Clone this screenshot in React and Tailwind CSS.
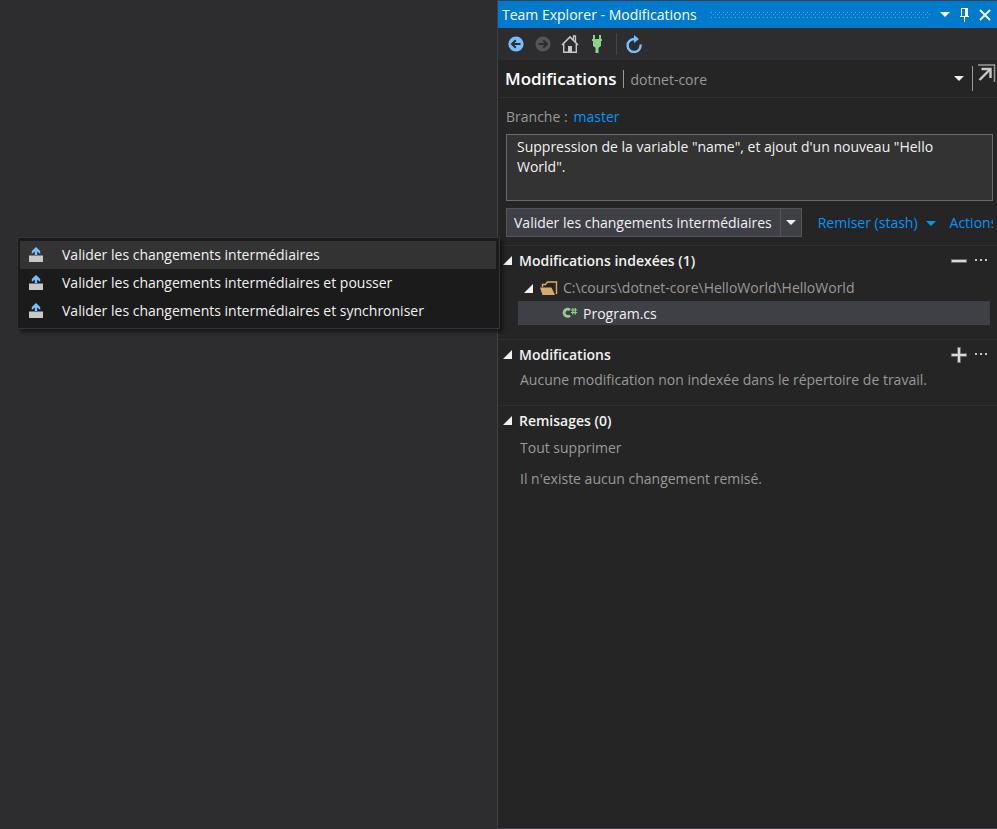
import { useState } from 'react'

const COMMIT_ACTIONS = [
  'Valider les changements intermédiaires',
  'Valider les changements intermédiaires et pousser',
  'Valider les changements intermédiaires et synchroniser',
]

function CaretDown({ className = '' }) {
  return (
    <svg width="10" height="5" viewBox="0 0 10 5" className={className} aria-hidden="true">
      <path d="M0 0h10L5 5z" fill="currentColor" />
    </svg>
  )
}

function ExpandedArrow() {
  return (
    <svg width="9" height="9" viewBox="0 0 9 9" className="shrink-0 text-[#f1f1f1]" aria-hidden="true">
      <path d="M9 0v9H0z" fill="currentColor" />
    </svg>
  )
}

function PinIcon() {
  return (
    <svg width="9" height="14" viewBox="0 0 9 14" shapeRendering="crispEdges" aria-hidden="true">
      <path d="M1 0h7v8h1v1H5v5H4V9H0V8h1zM2 1v7h3V1z" fill="currentColor" fillRule="evenodd" />
    </svg>
  )
}

function CloseIcon() {
  return (
    <svg width="12" height="12" viewBox="0 0 12 12" aria-hidden="true">
      <path d="M1 1l10 10M11 1L1 11" stroke="currentColor" strokeWidth="1.8" fill="none" />
    </svg>
  )
}

function ArrowCircle({ flip }) {
  return (
    <svg width="16" height="16" viewBox="0 0 16 16" aria-hidden="true">
      <circle cx="8" cy="8" r="7.6" fill="currentColor" />
      <path
        d={flip ? 'M3.5 8h8M8.2 4.2L12 8l-3.8 3.8' : 'M12.5 8h-8M7.8 4.2L4 8l3.8 3.8'}
        stroke="#2d2d30"
        strokeWidth="2"
        fill="none"
      />
    </svg>
  )
}

function HomeIcon() {
  return (
    <svg width="18" height="18" viewBox="0 0 18 18" aria-hidden="true">
      <path d="M12.5 5V1h2v6" fill="none" stroke="#c8c8c8" strokeWidth="1.3" />
      <path d="M1 10l8-8 8 8" fill="none" stroke="#c8c8c8" strokeWidth="1.6" />
      <path d="M2.7 9v8.2h12.6V9" fill="none" stroke="#c8c8c8" strokeWidth="1.4" />
      <path d="M7 11h4v6H7z" fill="#c8c8c8" />
    </svg>
  )
}

function PlugIcon() {
  return (
    <svg width="12" height="18" viewBox="0 0 12 18" aria-hidden="true">
      <path d="M2 0h2v4h4V0h2v4h1v2h-1v5l-2 1.500H7.500V18h-3v-5.500H4L2 11V6H1V4h1z" fill="#8dd28a" />
    </svg>
  )
}

function RefreshIcon() {
  return (
    <svg width="16" height="18" viewBox="0 0 16 18" aria-hidden="true">
      <path d="M14.500 9.500A6.500 6.500 0 1 1 8 4h2" fill="none" stroke="#75bfff" strokeWidth="2.400" />
      <path d="M8 0l5 4-5 4z" fill="#75bfff" />
    </svg>
  )
}

function UndockIcon() {
  return (
    <svg width="18" height="18" viewBox="0 0 18 18" aria-hidden="true">
      <path d="M0 1h16.500v17" fill="none" stroke="#9a9a9a" strokeWidth="1.500" />
      <path d="M1.500 16L12 5.500" fill="none" stroke="#c8c8c8" strokeWidth="2.400" />
      <path d="M3.500 5h9v9" fill="none" stroke="#c8c8c8" strokeWidth="2.400" />
    </svg>
  )
}

function CommitIcon() {
  return (
    <svg width="16" height="18" viewBox="0 0 16 18" className="shrink-0" aria-hidden="true">
      <path d="M8 1l4.200 4v3L9.200 5.500V9H6.800V5.500L3.800 8V5z" fill="#75bfff" />
      <path d="M1 9.500h14V16H1z" fill="#c8c8c8" />
    </svg>
  )
}

function FolderIcon() {
  return (
    <svg width="18" height="14" viewBox="0 0 18 14" className="shrink-0" aria-hidden="true">
      <path d="M2.500 6V3.500h3L7.500 1h9v12" fill="none" stroke="#d8aa6a" strokeWidth="1.400" />
      <path d="M0 6.500h11.500l3.500 7.500H2.500z" fill="#d8aa6a" />
    </svg>
  )
}

function CSharpIcon() {
  return (
    <svg width="16" height="12" viewBox="0 0 16 12" className="shrink-0" aria-hidden="true">
      <path d="M8 3A3.600 3.600 0 1 0 8 8.500" fill="none" stroke="#8dd28a" strokeWidth="2.800" />
      <path d="M10.800 1v6.500M13.300 1v6.500M9 3h6.200M9 5.500h6.200" stroke="#8dd28a" strokeWidth="1.200" />
    </svg>
  )
}

function DotGrip() {
  return (
    <svg height="6" className="h-[6px] min-w-0 flex-1" shapeRendering="crispEdges" aria-hidden="true">
      <defs>
        <pattern id="grip" width="4" height="6" patternUnits="userSpaceOnUse">
          <path d="M0 0h1v1H0zM2 2h1v1H2zM0 5h1v1H0z" fill="#59a8de" />
        </pattern>
      </defs>
      <rect width="100%" height="6" fill="url(#grip)" />
    </svg>
  )
}

function MoreButton() {
  return (
    <button type="button" aria-label="Plus" className="flex h-4 w-4 items-center justify-center">
      <svg width="14" height="4" viewBox="0 0 14 4" shapeRendering="crispEdges" aria-hidden="true">
        <path d="M1 0h2v2H1zM6 0h2v2H6zM11 0h2v2h-2z" fill="#c8c8c8" />
      </svg>
    </button>
  )
}

function StageButton({ label, plus }) {
  const shape = plus ? 'M1 8h14M8 1v14' : 'M1 8h14'
  return (
    <button type="button" aria-label={label} className="flex h-4 w-4 items-center justify-center">
      <svg width="16" height="16" viewBox="0 0 16 16" aria-hidden="true">
        <path d={shape} stroke="#7a7a7a" strokeWidth="3.600" strokeLinecap="square" />
        <path d={shape} stroke="#d8d8d8" strokeWidth="2" />
      </svg>
    </button>
  )
}

function Section({ title, actions, children }) {
  return (
    <section className="border-t border-[#2f2f32]">
      <div className="flex h-[29px] items-center pl-[5px] pr-2">
        <button type="button" className="flex items-center gap-[7px] font-semibold text-[#f1f1f1]">
          <ExpandedArrow />
          {title}
        </button>
        <div className="ml-auto flex gap-[6px]">{actions}</div>
      </div>
      {children}
    </section>
  )
}

function CommitMenu() {
  return (
    <ul
      role="menu"
      className="absolute right-full top-full z-10 mr-[7px] mt-px w-[483px] border border-[#333337] bg-[#1b1b1c] p-[3px] pl-[2px] shadow-[3px_3px_4px_rgba(0,0,0,0.5)]"
    >
      {COMMIT_ACTIONS.map((label, i) => (
        <li key={label} role="none">
          <button
            type="button"
            role="menuitem"
            className={`flex h-7 w-full items-center gap-[18px] whitespace-nowrap pl-2 text-left text-[#f1f1f1] ${i === 0 ? 'bg-[#333334]' : 'hover:bg-[#333334]'}`}
          >
            <CommitIcon />
            {label}
          </button>
        </li>
      ))}
    </ul>
  )
}

export default function App() {
  const [menuOpen, setMenuOpen] = useState(true)
  const [message, setMessage] = useState(
    'Suppression de la variable "name", et ajout d\'un nouveau "Hello World".',
  )

  return (
    <div className="grid min-h-screen grid-cols-[minmax(0,1fr)_500px] bg-[#2d2d30] font-['Open_Sans','Noto_Sans',sans-serif] text-[14px] leading-5 text-[#999999]">
      <main />

      <aside className="min-w-0 border border-r-0 border-[#3f3f46] bg-[#252526]">
        <header className="flex h-[27px] items-center bg-[#007acc] pl-1 pr-[6px] text-white">
          <h1 className="mr-[14px]">Team Explorer - Modifications</h1>
          <DotGrip />
          <div className="ml-[10px] flex items-center gap-[10px]">
            <button type="button" aria-label="Position de la fenêtre"><CaretDown /></button>
            <button type="button" aria-label="Épingler"><PinIcon /></button>
            <button type="button" aria-label="Fermer"><CloseIcon /></button>
          </div>
        </header>

        <nav className="flex h-8 items-center bg-[#2d2d30] pb-px pl-[10px]">
          <button type="button" aria-label="Précédent" className="text-[#75bfff]"><ArrowCircle /></button>
          <button type="button" aria-label="Suivant" className="ml-[11px] text-[#555558]"><ArrowCircle flip /></button>
          <button type="button" aria-label="Accueil" className="ml-[10px]"><HomeIcon /></button>
          <button type="button" aria-label="Gérer les connexions" className="ml-3"><PlugIcon /></button>
          <span className="ml-[13px] h-[22px] w-px bg-[#46464a]" />
          <button type="button" aria-label="Actualiser" className="ml-[9px]"><RefreshIcon /></button>
        </nav>

        <div className="flex h-[37px] items-center pl-[7px]">
          <h2 className="text-[17px] font-semibold text-white">Modifications</h2>
          <span className="ml-[7px] h-[18px] w-px bg-[#999999]" />
          <span className="ml-[6px] pt-[2px]">dotnet-core</span>
          <button type="button" aria-label="Changer de page" className="ml-auto text-[#f1f1f1]"><CaretDown /></button>
          <span className="ml-2 h-[25px] w-px bg-[#999999]" />
          <button type="button" aria-label="Détacher" className="ml-[5px] mr-px self-start pt-1"><UndockIcon /></button>
        </div>

        <div className="border-t border-[#2f2f32] px-2 pb-2 pt-[9px]">
          <p className="flex gap-[6px]">
            Branche :
            <a href="#master" className="text-[#0097fb]">master</a>
          </p>
          <textarea
            aria-label="Message de validation"
            className="mt-[7px] block h-[67px] w-[calc(100%+4px)] resize-none border border-[#686872] bg-[#333333] px-[10px] py-[2px] text-[#f1f1f1] outline-none"
            value={message}
            onChange={(e) => setMessage(e.target.value)}
          />

          <div className="-mr-1 mt-[7px] flex items-center">
            <div className="relative flex h-[29px] shrink-0 border border-[#555559] bg-[#3f3f46] text-[#f1f1f1]">
              <button type="button" className="whitespace-nowrap pl-[7px] pr-2 pt-px">{COMMIT_ACTIONS[0]}</button>
              <button
                type="button"
                aria-label="Autres validations"
                aria-expanded={menuOpen}
                onClick={() => setMenuOpen(!menuOpen)}
                className="flex w-[21px] items-center justify-center border-l border-[#555559]"
              >
                <CaretDown />
              </button>
              {menuOpen && <CommitMenu />}
            </div>
            <div className="ml-4 flex min-w-0 gap-[14px] overflow-hidden whitespace-nowrap text-[#0097fb]">
              <button type="button" className="flex shrink-0 items-center gap-2">
                Remiser (stash)
                <CaretDown className="mt-[2px]" />
              </button>
              <button type="button" className="shrink-0">Actions</button>
            </div>
          </div>
        </div>

        <Section
          title="Modifications indexées (1)"
          actions={<><StageButton label="Tout désindexer" /><MoreButton /></>}
        >
          <div className="pb-[14px]">
            <div className="flex h-[26px] items-center pl-[26px]">
              <ExpandedArrow />
              <span className="ml-[7px] flex"><FolderIcon /></span>
              <span className="ml-[5px]">C:\cours\dotnet-core\HelloWorld\HelloWorld</span>
            </div>
            <button
              type="button"
              className="ml-5 mr-[7px] flex h-6 w-[calc(100%-27px)] items-center gap-[5px] bg-[#3f3f46] pl-11 text-[#f1f1f1]"
            >
              <CSharpIcon />
              <span className="pt-px">Program.cs</span>
            </button>
          </div>
        </Section>

        <Section
          title="Modifications"
          actions={<><StageButton plus label="Tout indexer" /><MoreButton /></>}
        >
          <p className="pb-[15px] pl-[22px] pt-px">Aucune modification non indexée dans le répertoire de travail.</p>
        </Section>

        <Section title="Remisages (0)">
          <div className="flex flex-col items-start gap-[11px] pl-[22px] pt-[3px]">
            <button type="button">Tout supprimer</button>
            <p>Il n'existe aucun changement remisé.</p>
          </div>
        </Section>
      </aside>
    </div>
  )
}
